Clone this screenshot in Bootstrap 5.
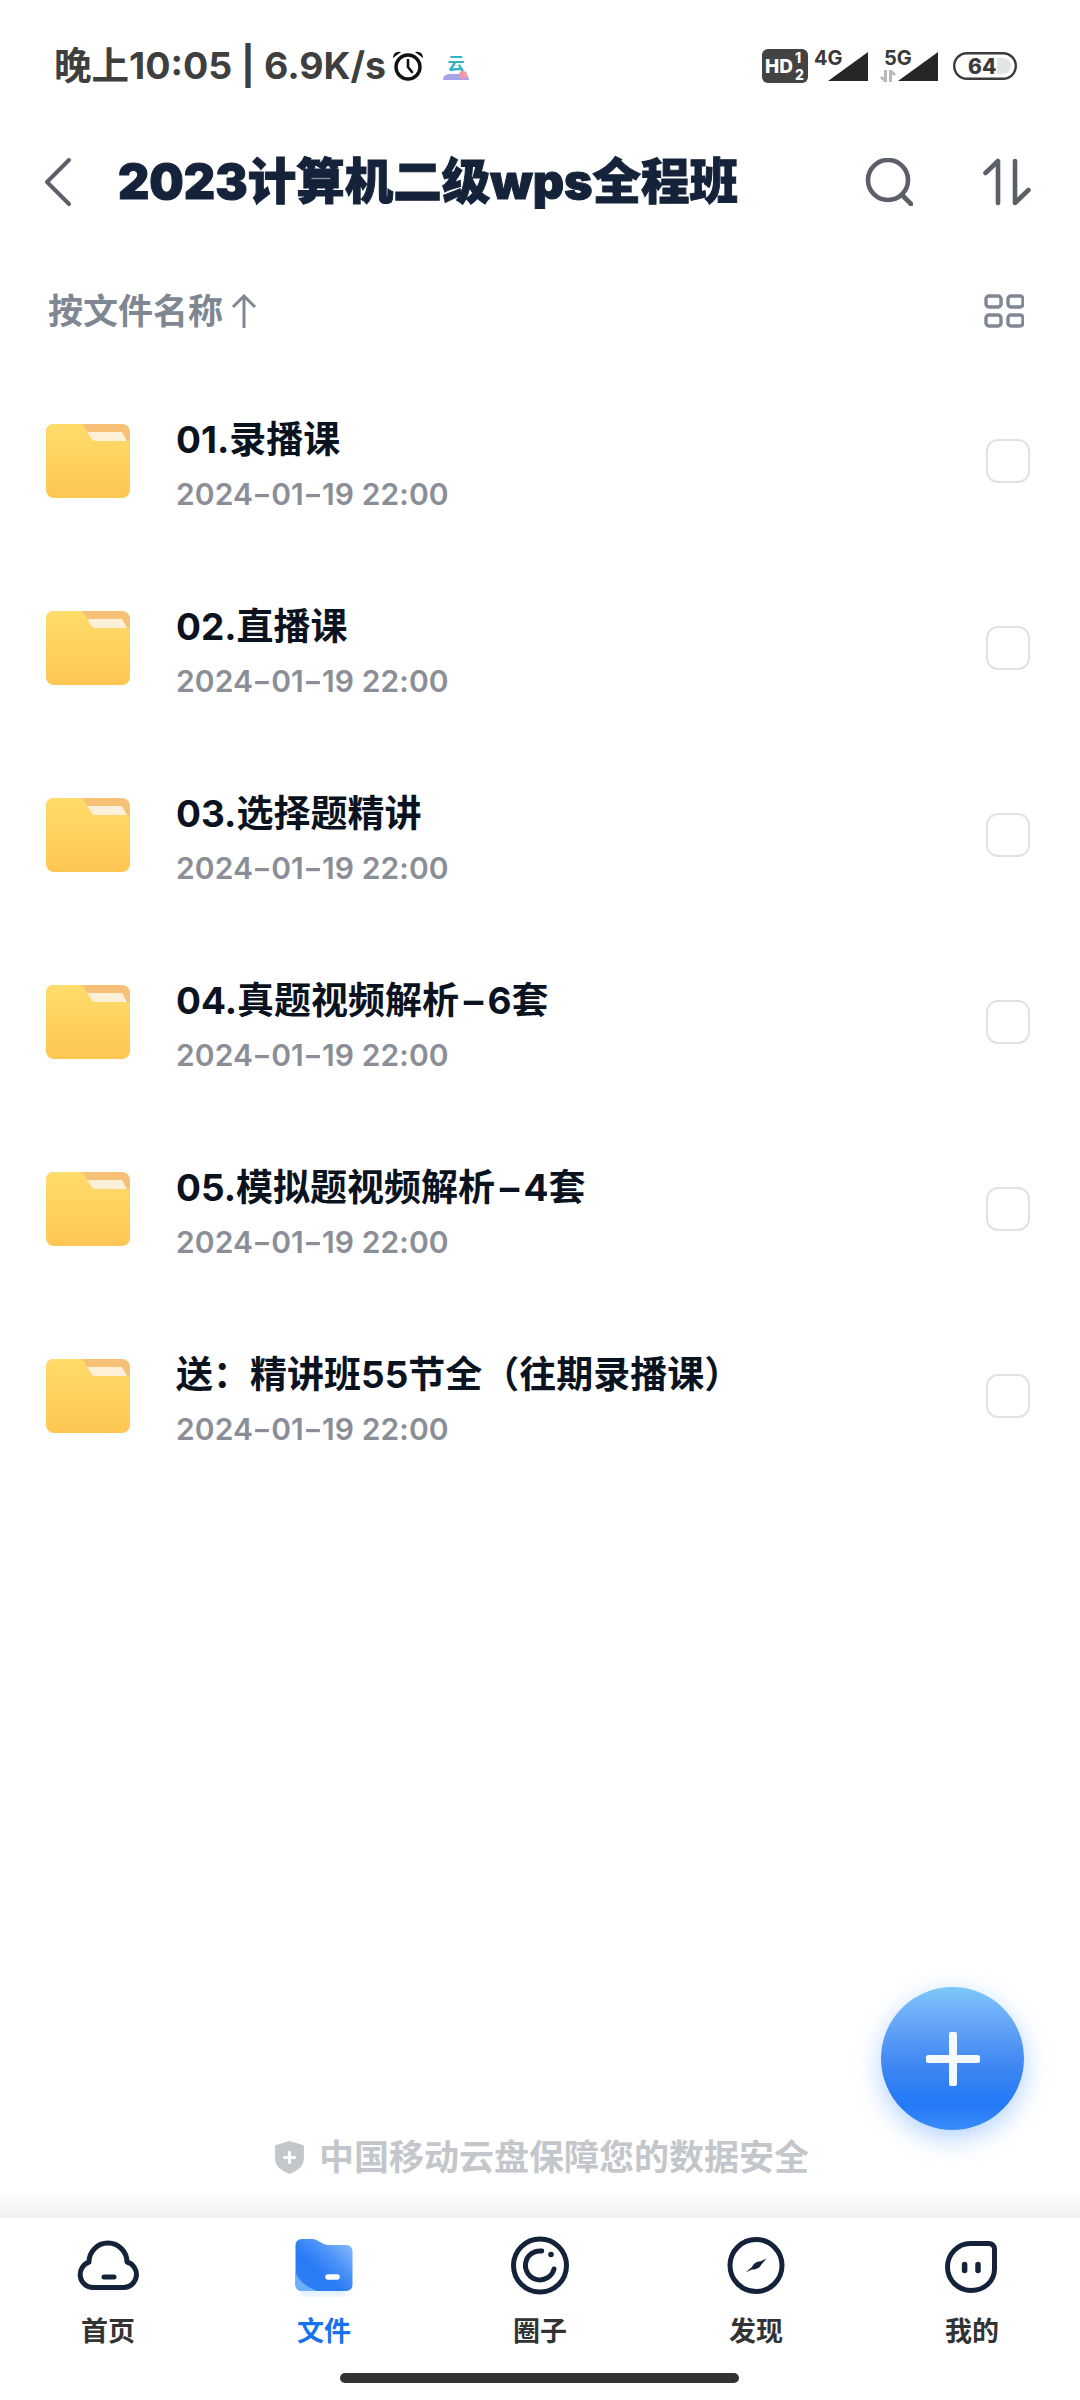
<!DOCTYPE html>
<html lang="zh-CN">
<head>
<meta charset="utf-8">
<title>2023计算机二级wps全程班</title>
<link href="https://cdn.jsdelivr.net/npm/bootstrap@5.3.0/dist/css/bootstrap.min.css" rel="stylesheet">
<style>
html,body{margin:0;height:2400px;background:#fff;overflow:hidden}
body{font-family:Inter,"Noto Sans CJK SC",sans-serif;width:1080px}
.screen{width:1080px;height:2400px;position:relative}
.sbar{height:132px;padding:0 0 0 54px;color:#3f3f3f;font-size:37.5px;font-weight:700;line-height:1}
.sbar-left{height:40px;margin-top:46px}
.clock-ic{margin-left:5px}
.app-ic{margin-left:17px;overflow:visible}
.sbar-right{margin-top:48px;padding-right:63px}
.net-block{position:relative;height:36px}
.net-4g{width:54px;margin-left:6px}
.net-5g{width:53px;margin-left:16px}
.net-tri{position:absolute;left:14px;top:4px}
.net-arrows{position:absolute;left:-4px;top:22px}
.netlabel{position:absolute;left:0;top:0;font-size:20px;font-weight:700;color:#3a3a3a;line-height:1}
.batt-ic{margin-left:16px;margin-top:4px}
.topbar{height:100px;padding:0 0 0 44px}
.title-txt{font-size:48.5px;font-weight:900;color:#15233a;margin-left:46px;line-height:1;white-space:nowrap;-webkit-text-stroke:1px #15233a}
.top-icons{margin-left:auto;padding-right:49px}
.search-ic{margin-right:70px}
.sortline{height:112px;margin-top:23px;padding:0 8px 0 48px;color:#7f8792;font-size:35px;font-weight:700}
.file-row{height:187px;padding:0 10px 0 46px}
.folder-ic{flex:0 0 84px;margin-right:46px;display:block}
.ftext{padding-top:9px}
.fname{font-size:37px;font-weight:700;color:#0b1320;line-height:46px;white-space:nowrap}
.fdate{font-size:30px;font-weight:600;color:#8a8e96;line-height:40px;margin-top:11px;letter-spacing:.1px}
.dash{display:inline-block;transform:scaleX(1.6);margin:0 5.5px}
.fdate .dash{transform:scaleX(1.4);margin:0 2px}
.cbox{width:44px;height:44px;border:2px solid #e0e2e5;border-radius:12px;margin-left:auto;margin-right:40px;background:#fff}
.safe-note{position:absolute;left:0;right:0;top:2130px;padding-left:2px;gap:13px;color:#c3c7cb;font-size:35px;font-weight:700;line-height:54px}
.fab{position:absolute;left:881px;top:1987px;width:143px;height:143px;border-radius:50%;background:linear-gradient(180deg,#7cc8fb 0%,#6aa9f8 22%,#3f87f2 55%,#2379f6 82%,#3a8cf8 100%);box-shadow:0 8px 26px rgba(53,140,250,.38)}
.tabbar{position:absolute;left:0;right:0;top:2218px;height:182px;background:#fff}
.tabshade{position:absolute;left:0;right:0;top:2190px;height:28px;background:linear-gradient(180deg,#fff,#f1f1f2)}
.tabcell{width:216px;padding-top:18px}
.tabcell svg{display:block;height:70px;width:80px;overflow:visible}
.tablabel{font-size:27px;font-weight:700;color:#333;line-height:34px;margin-top:9px}
.tabon{color:#1872ee}
.homebar{position:absolute;left:340px;top:2373px;width:399px;height:10px;border-radius:5px;background:#333}
</style>
</head>
<body>
<div class="screen">
  <div class="sbar d-flex justify-content-between align-items-start">
    <div class="sbar-left d-flex align-items-center">
      <span>晚上10:05 | 6.9K/s</span>
      <svg class="clock-ic" width="34" height="34" viewBox="0 0 34 34" aria-hidden="true"><circle cx="17" cy="18" r="12" fill="none" stroke="#111" stroke-width="3.4"/><path d="M17 11v7l4 5" fill="none" stroke="#111" stroke-width="2.6" stroke-linecap="round"/><path d="M2 9a6 6 0 0 1 8-6zM32 9a6 6 0 0 0-8-6z" fill="#111"/></svg>
      <svg class="app-ic" width="28" height="32" viewBox="0 0 28 32" aria-hidden="true"><text x="14" y="20" text-anchor="middle" font-family="Noto Sans CJK SC" font-size="17" font-weight="700" fill="#2fb3c6">云</text><path d="M1 30q0-6 7-6h12q7 0 7 6z" fill="#a5a3ea"/><circle cx="21" cy="25" r="4" fill="#ef9aa8"/></svg>
    </div>
    <div class="sbar-right d-flex align-items-start">
      <svg width="46" height="36" viewBox="0 0 46 36" aria-hidden="true"><rect width="46" height="34" y="1" rx="6" fill="#434343"/><text x="3" y="25" font-family="Inter" font-size="19" font-weight="800" fill="#fff">HD</text><text x="33" y="15" font-family="Inter" font-size="14" font-weight="800" fill="#fff">1</text><text x="33" y="32" font-family="Inter" font-size="14" font-weight="800" fill="#fff">2</text></svg>
      <div class="net-block net-4g">
        <span class="netlabel">4G</span>
        <svg class="net-tri" width="40" height="29" viewBox="0 0 40 29" aria-hidden="true"><path d="M40 0v29H0z" fill="#262626"/></svg>
      </div>
      <div class="net-block net-5g">
        <span class="netlabel">5G</span>
        <svg class="net-arrows" width="16" height="12" viewBox="0 0 16 12" aria-hidden="true"><path d="M5.500 0v11L1 7M10.500 12V1L15 5" stroke="#b9b9b9" stroke-width="3" fill="none"/></svg>
        <svg class="net-tri" width="40" height="29" viewBox="0 0 40 29" aria-hidden="true"><path d="M40 0v29H0z" fill="#262626"/></svg>
      </div>
      <svg class="batt-ic" width="64" height="28" viewBox="0 0 64 28" aria-hidden="true"><rect x="1.200" y="1.200" width="61.600" height="25.600" rx="12.800" fill="#fff" stroke="#3b3b3b" stroke-width="2.400"/><rect x="6" y="6" width="52" height="16" rx="8" fill="#e4e4e4"/><path d="M6 14a8 8 0 0 1 8-8h30v16H14a8 8 0 0 1-8-8z" fill="#fff"/><text x="15" y="22" font-family="Inter" font-size="21" font-weight="800" fill="#3b3b3b">64</text></svg>
    </div>
  </div>

  <div class="topbar d-flex align-items-center">
    <svg width="28" height="50" viewBox="0 0 28 50" aria-hidden="true"><path d="M25 3 3 25l22 22" fill="none" stroke="#5b6068" stroke-width="4" stroke-linecap="round" stroke-linejoin="round"/></svg>
    <div class="title-txt">2023计算机二级wps全程班</div>
    <div class="top-icons d-flex align-items-center">
      <svg class="search-ic" width="48" height="48" viewBox="0 0 48 48" aria-hidden="true"><circle cx="23" cy="22" r="20" fill="none" stroke="#5b6068" stroke-width="4.600"/><path d="M37 37l9 9" stroke="#5b6068" stroke-width="4.600" stroke-linecap="round"/></svg>
      <svg width="48" height="48" viewBox="0 0 48 48" aria-hidden="true"><path d="M2.500 15 15 3v42" fill="none" stroke="#5b6068" stroke-width="4.600" stroke-linecap="round" stroke-linejoin="round"/><path d="M32 3v42l13.500-13" fill="none" stroke="#5b6068" stroke-width="4.600" stroke-linecap="round" stroke-linejoin="round"/></svg>
    </div>
  </div>

  <div class="sortline d-flex align-items-center justify-content-between">
    <div class="d-flex align-items-center"><span>按文件名称</span>
      <svg class="ms-2" width="26" height="34" viewBox="0 0 26 34" aria-hidden="true"><path d="M13 2v32M2 13 13 2l11 11" fill="none" stroke="#7f8792" stroke-width="3"/></svg>
    </div>
    <svg class="me-5" width="40" height="34" viewBox="0 0 40 34" aria-hidden="true"><g fill="none" stroke="#7f8792" stroke-width="3.400"><rect x="2" y="2" width="15" height="11" rx="3"/><rect x="24" y="2" width="15" height="11" rx="3"/><rect x="2" y="21" width="15" height="11" rx="3"/><rect x="24" y="21" width="15" height="11" rx="3"/></g></svg>
  </div>

  <div id="files"></div>

  <div class="safe-note d-flex justify-content-center align-items-center">
    <svg width="33" height="35" viewBox="0 0 32 34" aria-hidden="true"><path d="M16 1 30 5v13c0 8-7 12-14 15C9 30 2 26 2 18V5z" fill="#c3c7cb"/><path d="M16 11v12M10 17h12" stroke="#fff" stroke-width="3"/></svg>
    <span>中国移动云盘保障您的数据安全</span>
  </div>

  <div class="fab d-flex align-items-center justify-content-center">
    <svg width="54" height="54" viewBox="0 0 54 54" aria-hidden="true"><path d="M27 3v48M3 27h48" stroke="#f4f8ff" stroke-width="8" stroke-linecap="round"/></svg>
  </div>

  <div class="tabshade"></div>
  <div class="tabbar d-flex justify-content-center">
    <div class="tabcell d-flex flex-column align-items-center">
      <svg viewBox="0 0 80 70" aria-hidden="true"><path d="M25 51.500a13 13 0 0 1-4-25.300 19 19 0 0 1 38-.2 13 13 0 0 1-3 25.500z" fill="none" stroke="#15233a" stroke-width="5" stroke-linejoin="round"/><path d="M36 41h10" stroke="#15233a" stroke-width="5" stroke-linecap="round"/></svg>
      <div class="tablabel">首页</div>
    </div>
    <div class="tabcell d-flex flex-column align-items-center">
      <svg viewBox="0 0 80 70" aria-hidden="true"><defs><linearGradient id="tabg" x1="1" y1="0" x2="0" y2="1"><stop offset="0" stop-color="#94c3fd"/><stop offset=".35" stop-color="#4d94f8"/><stop offset=".6" stop-color="#2a7bf5"/><stop offset="1" stop-color="#2d7df6"/></linearGradient><filter id="blurf"><feGaussianBlur stdDeviation="3"/></filter></defs><rect x="16" y="52" width="46" height="8" fill="#b9dcff" opacity=".5" filter="url(#blurf)"/><path d="M17.500 3H28c7 0 9 6 17 6h17.500a6 6 0 0 1 6 6v34a6 6 0 0 1-6 6H17.500a6 6 0 0 1-6-6V9a6 6 0 0 1 6-6z" fill="url(#tabg)"/><path d="M11.500 36c3 9 11 15 22 19h-16a6 6 0 0 1-6-6z" fill="#6cb0fb"/><path d="M44 41h9" stroke="#fff" stroke-width="5.500" stroke-linecap="round"/></svg>
      <div class="tablabel tabon">文件</div>
    </div>
    <div class="tabcell d-flex flex-column align-items-center">
      <svg viewBox="0 0 80 70" aria-hidden="true"><circle cx="40" cy="29.500" r="26.500" fill="none" stroke="#15233a" stroke-width="5"/><path d="M41.700 15A14.500 14.500 0 1 0 54 33" fill="none" stroke="#15233a" stroke-width="5" stroke-linecap="round"/><circle cx="51" cy="18.500" r="2.800" fill="#15233a"/></svg>
      <div class="tablabel">圈子</div>
    </div>
    <div class="tabcell d-flex flex-column align-items-center">
      <svg viewBox="0 0 80 70" aria-hidden="true"><circle cx="40" cy="29.500" r="26" fill="none" stroke="#15233a" stroke-width="5"/><path d="M29.500 36.500 36 31c1-3 5-6 8-5.500l6.500-3L45 29c-1 3-6 5-9 4.500z" fill="#15233a"/></svg>
      <div class="tablabel">发现</div>
    </div>
    <div class="tabcell d-flex flex-column align-items-center">
      <svg viewBox="0 0 80 70" aria-hidden="true"><path d="M38 7.500h19a5.500 5.500 0 0 1 5.500 5.500v20c0 12-10 21.500-23.500 21.500-13 0-23.500-10.500-23.500-23.500S26 7.500 38 7.500z" fill="none" stroke="#15233a" stroke-width="5" stroke-linejoin="round"/><path d="M32.600 28.500v6M46 28.500v6" stroke="#15233a" stroke-width="5.500" stroke-linecap="round"/></svg>
      <div class="tablabel">我的</div>
    </div>
  </div>
  <div class="homebar"></div>
</div>
<svg width="0" height="0" class="position-absolute" aria-hidden="true"><defs>
  <linearGradient id="foldg" x1="0" y1="0" x2="0" y2="1"><stop offset="0" stop-color="#ffdc6b"/><stop offset="1" stop-color="#fec653"/></linearGradient>
</defs></svg>
<script>
var names=["01.录播课","02.直播课","03.选择题精讲","04.真题视频解析-6套","05.模拟题视频解析-4套","送：精讲班55节全（往期录播课）"];
function dashed(s){return s.replace(/-/g,'<span class="dash">-</span>');}
document.getElementById('files').innerHTML=names.map(function(n){
 return '<div class="file-row d-flex align-items-center">'+
 '<svg class="folder-ic" width="84" height="74" viewBox="0 0 84 74" aria-hidden="true"><rect width="84" height="60" rx="8" fill="#f6c176"/><path d="M40 8h36l5 9H46z" fill="#fdf0d8"/><path d="M7 0h27c3 0 4 2 6 6l5 8c1 2 2 3 5 3h34v49a8 8 0 0 1-8 8H8a8 8 0 0 1-8-8V7a7 7 0 0 1 7-7z" fill="url(#foldg)"/></svg>'+
 '<div class="ftext"><div class="fname">'+dashed(n)+'</div><div class="fdate">'+dashed("2024-01-19 22:00")+'</div></div>'+
 '<div class="cbox"></div></div>';
}).join('');
</script>
<script src="https://cdn.jsdelivr.net/npm/bootstrap@5.3.0/dist/js/bootstrap.bundle.min.js"></script>
</body>
</html>
